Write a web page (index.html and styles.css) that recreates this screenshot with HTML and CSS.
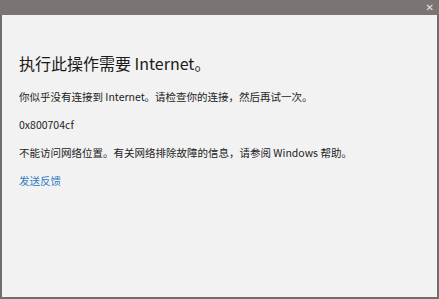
FILE: index.html
```html
<!DOCTYPE html>
<html lang="zh-CN">
<head>
<meta charset="utf-8">
<link rel="stylesheet" href="styles.css">
</head>
<body>
<div class="window">
  <div class="titlebar">
    <span class="close">&#x2715;</span>
  </div>
  <div class="content">
    <h1 class="title">执行此操作需要 Internet。</h1>
    <p class="line">你似乎没有连接到 Internet。请检查你的连接，然后再试一次。</p>
    <p class="line">0x800704cf</p>
    <p class="line">不能访问网络位置。有关网络排除故障的信息，请参阅 Windows 帮助。</p>
    <p class="line link">发送反馈</p>
  </div>
</div>
</body>
</html>
```
FILE: styles.css
```css
html, body {
  margin: 0;
  padding: 0;
  width: 439px;
  height: 299px;
  overflow: hidden;
  background: #6e6a69;
}
.window {
  width: 439px;
  height: 299px;
  display: flex;
  flex-direction: column;
  box-sizing: border-box;
  padding: 0 2px 2px 2px;
  background: #716d6c;
  font-family: "Noto Sans CJK SC", "Noto Sans", sans-serif;
}
.titlebar {
  height: 15px;
  display: flex;
  justify-content: flex-end;
  align-items: center;
  background: #7a7574;
  margin: 0 -2px;
  padding-right: 5px;
}
.close {
  color: #e8e6e6;
  font-size: 10px;
  line-height: 1;
  font-family: "DejaVu Sans", sans-serif;
}
.content {
  flex: 1;
  background: #f2f2f2;
  padding: 36px 17px 0 17px;
  color: #222222;
}
.title {
  margin: 0 0 14px 0;
  font-size: 16px;
  font-weight: 400;
  line-height: 24px;
  color: #1a1a1a;
}
.line {
  margin: 0 0 12px 0;
  font-size: 10.5px;
  line-height: 16px;
}
.link {
  color: #2f7cc0;
}
```
